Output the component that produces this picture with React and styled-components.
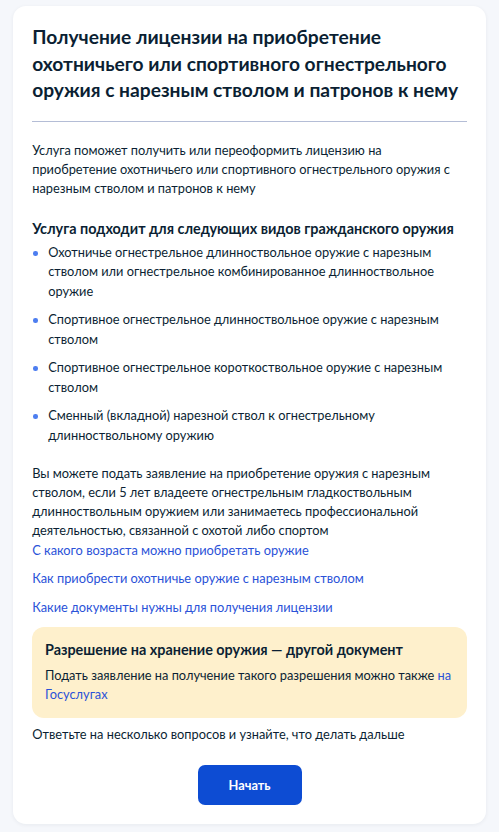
import React from "react";
import styled, { createGlobalStyle } from "styled-components";

const GlobalStyle = createGlobalStyle`
  body {
    margin: 0;
    background-color: #f5f7fb;
    font-family: Lato, "Noto Sans", sans-serif;
    color: #0b1f33;
  }
`;

const Page = styled.div`
  padding: 6px 13px 8px;
`;

const Card = styled.section`
  background-color: #ffffff;
  border-radius: 13px;
  box-shadow: 0 1px 4px rgba(11, 31, 51, 0.06);
  padding: 18px 19.2px 19px;
`;

const Title = styled.h1`
  margin: 0;
  font-size: 19.2px;
  line-height: 26.5px;
  font-weight: 700;
`;

const Divider = styled.hr`
  margin: 17.5px 0 19px;
  border: none;
  border-top: 1px solid #b4bdd6;
`;

const Text = styled.p`
  margin: ${(p) => p.$margin || "0"};
  font-size: 12.8px;
  line-height: 19.2px;
`;

const Subtitle = styled.h2`
  margin: 0 0 3px;
  font-size: 14.4px;
  line-height: 22px;
  font-weight: 700;
`;

const List = styled.ul`
  list-style: none;
  margin: 0 0 19px;
  padding: 0;
  display: flex;
  flex-direction: column;
  gap: 9.6px;
`;

const Item = styled.li`
  position: relative;
  padding-left: 16px;
  font-size: 12.8px;
  line-height: 19.2px;

  &::before {
    content: "";
    position: absolute;
    left: 1px;
    top: 8px;
    width: 4.5px;
    height: 4.5px;
    border-radius: 50%;
    background-color: #4d7ef0;
  }
`;

const Links = styled.div`
  display: flex;
  flex-direction: column;
  gap: 9.6px;
  margin-bottom: 10px;
`;

const Link = styled.a`
  color: #2a52d8;
  text-decoration: none;
  font-size: 12.8px;
  line-height: 19.2px;
  cursor: pointer;
`;

const InlineLink = styled(Link)`
  font-size: inherit;
  line-height: inherit;
`;

const Notice = styled.div`
  background-color: #fef0cc;
  border-radius: 12px;
  padding: 12.8px 12.8px 13px;
`;

const NoticeTitle = styled.h3`
  margin: 0 0 6.8px;
  font-size: 14.4px;
  line-height: 19.2px;
  font-weight: 700;
`;

const Actions = styled.div`
  display: flex;
  justify-content: center;
  margin-top: 21px;
`;

const Button = styled.button`
  width: 104px;
  height: 40px;
  border: none;
  border-radius: 7px;
  background-color: #0d4cd3;
  color: #ffffff;
  font-family: Lato, "Noto Sans", sans-serif;
  font-size: 12.8px;
  font-weight: 700;
  cursor: pointer;

  &:hover {
    background-color: #0b40b3;
  }
`;

const kinds = [
  "Охотничье огнестрельное длинноствольное оружие с нарезным стволом или огнестрельное комбинированное длинноствольное оружие",
  "Спортивное огнестрельное длинноствольное оружие с нарезным стволом",
  "Спортивное огнестрельное короткоствольное оружие с нарезным стволом",
  "Сменный (вкладной) нарезной ствол к огнестрельному длинноствольному оружию",
];

const links = [
  "С какого возраста можно приобретать оружие",
  "Как приобрести охотничье оружие с нарезным стволом",
  "Какие документы нужны для получения лицензии",
];

const App = () => {
  return (
    <Page>
      <GlobalStyle />
      <Card>
        <Title>
          Получение лицензии на приобретение охотничьего или спортивного
          огнестрельного оружия с нарезным стволом и патронов к нему
        </Title>
        <Divider />
        <Text $margin="0 0 19.5px">
          Услуга поможет получить или переоформить лицензию на приобретение
          охотничьего или спортивного огнестрельного оружия с нарезным стволом
          и патронов к нему
        </Text>
        <Subtitle>Услуга подходит для следующих видов гражданского оружия</Subtitle>
        <List>
          {kinds.map((k) => (
            <Item key={k}>{k}</Item>
          ))}
        </List>
        <Text>
          Вы можете подать заявление на приобретение оружия с нарезным стволом,
          если 5 лет владеете огнестрельным гладкоствольным длинноствольным
          оружием или занимаетесь профессиональной деятельностью, связанной с
          охотой либо спортом
        </Text>
        <Links>
          {links.map((l) => (
            <Link key={l}>{l}</Link>
          ))}
        </Links>
        <Notice>
          <NoticeTitle>Разрешение на хранение оружия — другой документ</NoticeTitle>
          <Text>
            Подать заявление на получение такого разрешения можно также{" "}
            <InlineLink>на Госуслугах</InlineLink>
          </Text>
        </Notice>
        <Text $margin="7px 0 0">
          Ответьте на несколько вопросов и узнайте, что делать дальше
        </Text>
        <Actions>
          <Button>Начать</Button>
        </Actions>
      </Card>
    </Page>
  );
};

export default App;
